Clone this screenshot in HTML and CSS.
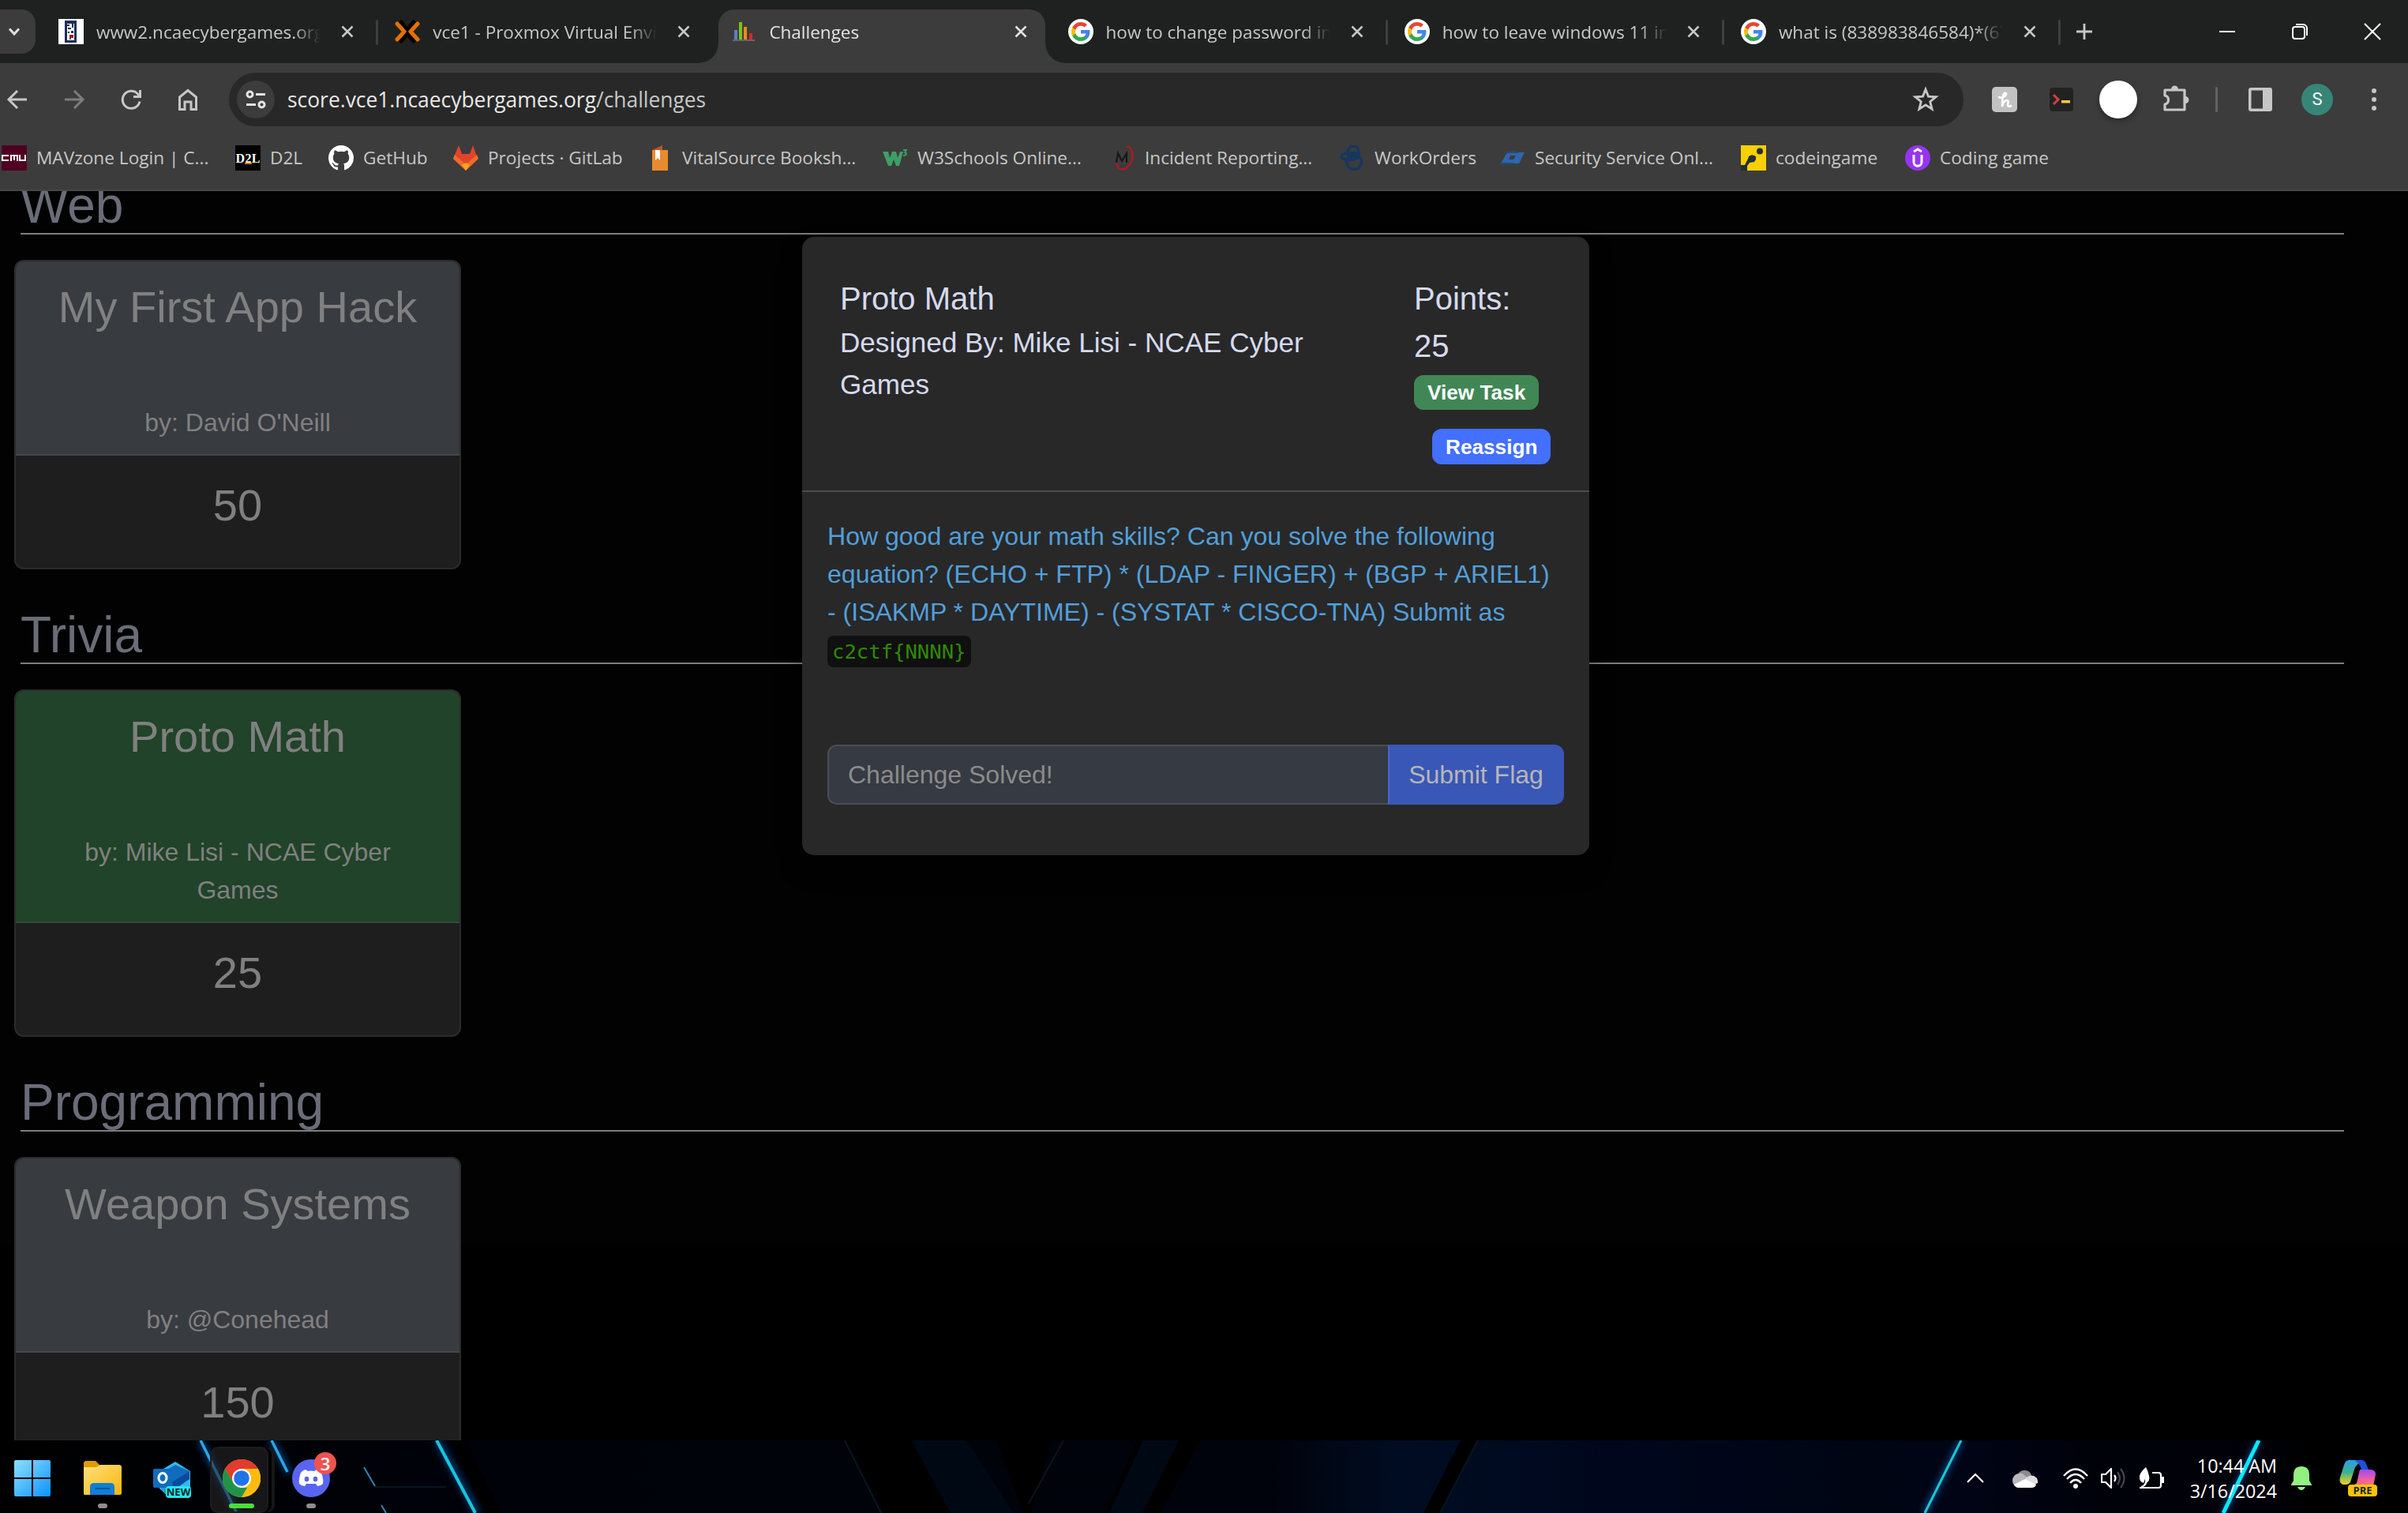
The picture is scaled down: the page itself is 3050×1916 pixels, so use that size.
FILE: index.html
```html
<!DOCTYPE html>
<html lang="en">
<head>
<meta charset="utf-8">
<title>Challenges</title>
<link rel="stylesheet" href="styles.css">
</head>
<body>
<svg class="defs" width="0" height="0" aria-hidden="true">
  <symbol id="x" viewBox="0 0 16 16"><path d="M1.5 1.5l13 13M14.500 1.5l-13 13" fill="none" stroke="currentColor" stroke-width="2.5"/></symbol>
  <symbol id="g" viewBox="0 0 32 32">
    <circle cx="16" cy="16" r="16" fill="#fff"/>
    <g transform="translate(4 4)">
      <path fill="#4285f4" d="M23.500 12.300c0-.8-.1-1.600-.2-2.300H12v4.500h6.500a5.500 5.500 0 0 1-2.400 3.600v3h3.900c2.300-2.100 3.500-5.200 3.500-8.800z"/>
      <path fill="#34a853" d="M12 24c3.200 0 6-1.100 8-2.900l-3.900-3c-1.100.7-2.500 1.200-4.100 1.200-3.100 0-5.800-2.100-6.700-5H1.300v3.100A12 12 0 0 0 12 24z"/>
      <path fill="#fbbc05" d="M5.300 14.300a7.200 7.200 0 0 1 0-4.600V6.600H1.300a12 12 0 0 0 0 10.800z"/>
      <path fill="#ea4335" d="M12 4.800c1.800 0 3.300.6 4.600 1.800L20 3.200A12 12 0 0 0 1.300 6.600l4 3.100c.9-2.900 3.600-4.900 6.700-4.900z"/>
    </g>
  </symbol>
</svg>

<header class="browser">
  <div class="tabstrip">
    <div class="tab-search"><svg width="16" height="16" viewBox="0 0 16 16"><path d="M2 4.500l6 6.500 6-6.500" fill="none" stroke="#dfdfdf" stroke-width="3"/></svg></div>
    <div class="tab divided">
      <svg class="fav" viewBox="0 0 32 32"><path fill="#fff" d="M0 0h32v32H0z"/><path fill="#1d2f57" d="M8 2h15v28H8z"/><path fill="#fff" d="M11 6h9v21h-9z"/><path fill="#1d2f57" d="M11 7h3v2h-3zM17 6h2v5h-2zM12 11h4v2h-4zM12 16h2v2h-2zM16 15h3v3h-3z"/><path fill="#9d1624" d="M14 20h5v4h-3v2h-2z"/></svg>
      <span class="tab-title">www2.ncaecybergames.org</span><svg class="close"><use href="#x"/></svg>
    </div>
    <div class="tab">
      <svg class="fav" viewBox="0 0 32 32"><g fill="none" stroke-linejoin="round" stroke-linecap="round"><path stroke="#000" stroke-width="5" d="M8 4l8 9 8-9M8 28l8-9 8 9"/><path stroke="#e57000" stroke-width="5" d="M3 6l9 10-9 10M29 6l-9 10 9 10"/></g></svg>
      <span class="tab-title">vce1 - Proxmox Virtual Envi</span><svg class="close"><use href="#x"/></svg>
    </div>
    <div class="tab active">
      <svg class="fav" viewBox="0 0 32 32"><path fill="#5a82c4" d="M4 14h4v12H4z"/><path fill="#7bc412" d="M10 4h4v22h-4z"/><path fill="#f08a1c" d="M16 10h4v16h-4z"/><path fill="#e02222" d="M23 18h4v8h-4z"/><path fill="#666" d="M2 26h28v2H2z"/></svg>
      <span class="tab-title">Challenges</span><svg class="close"><use href="#x"/></svg>
    </div>
    <div class="tab divided">
      <svg class="fav"><use href="#g"/></svg>
      <span class="tab-title">how to change password in</span><svg class="close"><use href="#x"/></svg>
    </div>
    <div class="tab divided">
      <svg class="fav"><use href="#g"/></svg>
      <span class="tab-title">how to leave windows 11 in</span><svg class="close"><use href="#x"/></svg>
    </div>
    <div class="tab divided">
      <svg class="fav"><use href="#g"/></svg>
      <span class="tab-title">what is (838983846584)*(67</span><svg class="close"><use href="#x"/></svg>
    </div>
    <svg class="new-tab" viewBox="0 0 22 22"><path d="M11 1v20M1 11h20" stroke="#c7c7c7" stroke-width="2.800"/></svg>
    <div class="window-controls">
      <svg width="22" height="22" viewBox="0 0 22 22"><path d="M1 11h20" stroke="#fff" stroke-width="2"/></svg>
      <svg width="22" height="22" viewBox="0 0 22 22" fill="none" stroke="#fff" stroke-width="2"><rect x="2" y="5" width="15" height="15" rx="3"/><path d="M6 2h9a5 5 0 0 1 5 5v9"/></svg>
      <svg width="22" height="22" viewBox="0 0 22 22"><path d="M1 1l20 20M21 1L1 21" stroke="#fff" stroke-width="2"/></svg>
    </div>
  </div>

  <div class="toolbar">
    <nav class="nav">
      <svg viewBox="0 0 28 28"><path d="M26 14H3M14 3L3 14l11 11" /></svg>
      <svg class="off" viewBox="0 0 28 28"><path d="M2 14h23M14 3l11 11-11 11"/></svg>
      <svg viewBox="0 0 28 28"><path d="M25 16.500A11 11 0 1 1 22.500 7L25 9.500M25.500 2v8.500H17"/></svg>
      <svg viewBox="0 0 28 28"><path d="M3.500 11L14 2.500 24.500 11v15.500H18V17h-8v9.500H3.500z"/></svg>
    </nav>
    <div class="omnibox">
      <div class="site-info"><svg width="26" height="26" viewBox="0 0 26 26" fill="none" stroke="#e3e3e3" stroke-width="3"><circle cx="5.500" cy="6.500" r="3.500"/><path d="M13 6.500h12M1 19.500h12"/><circle cx="20.500" cy="19.500" r="3.500"/></svg></div>
      <span class="url"><b>score.vce1.ncaecybergames.org</b>/challenges</span>
      <svg class="star" viewBox="0 0 32 32"><path d="M16 4l3.300 8.300 9 .6-6.900 5.700 2.200 8.700L16 22.500l-7.600 4.800 2.200-8.700-6.900-5.700 9-.6z" fill="none" stroke="#c7c7c7" stroke-width="2.700"/></svg>
    </div>
    <div class="extensions">
      <svg class="e32" viewBox="0 0 32 32"><rect width="32" height="32" rx="5" fill="#c2c2c2"/><path d="M9 13c4 2 9-1 9-4 0-2-3-2-4 2-1 4-1 9-1 14 1-5 3-8 6-8 3 0 1 4 1 6 0 2 2 2 4 1" fill="none" stroke="#fff" stroke-width="2.600" stroke-linecap="round"/></svg>
      <svg class="e32 term" viewBox="0 0 32 32"><rect x="1" y="1" width="30" height="30" rx="4" fill="#222"/><path d="M6 10l6 6-6 6" fill="none" stroke="#d63f38" stroke-width="3"/><path fill="#f6c944" d="M16 17h11v3.500H16z"/></svg>
      <span class="blank-ext"></span>
      <svg class="puzzle" viewBox="0 0 36 36"><path d="M5 8h25v25H5v-7c6-1 6-10 0-11z" fill="none" stroke="#c7c7c7" stroke-width="3.200" stroke-linejoin="round"/><path d="M13 7a4.500 4.500 0 0 1 9 0zM31 16a4 4 0 0 1 0 9z" fill="#c7c7c7"/></svg>
      <span class="bar"></span>
      <svg class="panel" viewBox="0 0 30 30"><path fill="#c7c7c7" fill-rule="evenodd" d="M3 0h24a3 3 0 0 1 3 3v24a3 3 0 0 1-3 3H3a3 3 0 0 1-3-3V3a3 3 0 0 1 3-3zM3.500 3.500v23H18v-23z"/></svg>
      <span class="avatar">S</span>
      <svg class="dots" viewBox="0 0 6 30" fill="#c7c7c7"><circle cx="3" cy="4" r="3"/><circle cx="3" cy="15" r="3"/><circle cx="3" cy="26" r="3"/></svg>
    </div>
  </div>

  <div class="bookmarks">
    <a><svg class="fav" viewBox="0 0 32 32"><path fill="#500021" d="M0 0h32v32H0z"/><path d="M9 13H1v6h8M12 20v-7h8v7M16 13v6M23 12v7h7v-7" fill="none" stroke="#fff" stroke-width="2"/></svg><span>MAVzone Login | C...</span></a>
    <a><svg class="fav" viewBox="0 0 32 32"><path fill="#000" d="M0 0h32v32H0z"/><text x="16" y="22" text-anchor="middle" class="d2l" textLength="31">D2L</text><path fill="#e87511" d="M12 22h9v2h-9z"/></svg><span>D2L</span></a>
    <a><svg class="fav" viewBox="0 0 16 16"><path fill="#fff" d="M8 0C3.580 0 0 3.580 0 8c0 3.540 2.290 6.530 5.470 7.590.4.070.55-.17.55-.38 0-.19-.01-.82-.01-1.490-2.010.37-2.530-.49-2.690-.94-.09-.23-.48-.94-.82-1.130-.28-.15-.68-.52-.01-.53.63-.01 1.080.58 1.230.82.72 1.210 1.870.87 2.330.66.070-.52.280-.87.510-1.070-1.780-.2-3.640-.89-3.640-3.950 0-.87.310-1.590.82-2.150-.08-.2-.36-1.020.08-2.120 0 0 .67-.21 2.200.82a7.600 7.600 0 0 1 4 0c1.530-1.040 2.200-.82 2.200-.82.44 1.100.16 1.920.08 2.120.51.56.82 1.270.82 2.150 0 3.070-1.870 3.750-3.650 3.950.29.250.54.730.54 1.480 0 1.070-.01 1.930-.01 2.200 0 .21.150.46.55.38A8.010 8.010 0 0 0 16 8c0-4.420-3.580-8-8-8z"/></svg><span>GetHub</span></a>
    <a><svg class="fav" viewBox="0 0 32 32"><path fill="#e24329" d="M7 0l4 11h10l4-11 6 17-15 15L0 17z"/><path fill="#ef6b2d" d="M2 12l14 12 14-12 2 5-16 15L0 17z"/><path fill="#fca326" d="M11 25l5-3 5 3-5 7z"/></svg><span>Projects · GitLab</span></a>
    <a><svg class="fav" viewBox="0 0 32 32"><path fill="#e88b2e" d="M6 6h20v26H6z"/><path fill="#c4502c" d="M6 6l13-6v6z"/><path fill="#fff" d="M10 6h6v13l-3-3-3 3z"/></svg><span>VitalSource Booksh...</span></a>
    <a><svg class="fav" viewBox="0 0 32 32"><path fill="#3f9e68" d="M0 8h7l2 8 3-8h5l2 8 3-8h4l-5 18h-4l-3-8-3 8H7z"/><path d="M26 6h4l-2 3c3 0 3 4-2 4" fill="none" stroke="#3f9e68" stroke-width="1.800"/></svg><span>W3Schools Online...</span></a>
    <a><svg class="fav" viewBox="0 0 32 32"><path d="M20 2c9-2 11 14 5 22-6 9-17 9-16-2" fill="none" stroke="#a51d25" stroke-width="2.500"/><path d="M8 22l2-12 5 10 6-10v12" fill="none" stroke="#151515" stroke-width="2"/></svg><span>Incident Reporting...</span></a>
    <a><svg class="fav" viewBox="0 0 32 32" fill="none" stroke="#16375f" stroke-width="3.500"><circle cx="17" cy="8" r="7"/><ellipse cx="13" cy="14" rx="11" ry="4.500"/><circle cx="18" cy="21" r="9.500"/></svg><span>WorkOrders</span></a>
    <a><svg class="fav" viewBox="0 0 32 32"><path fill="#2e65ac" fill-rule="evenodd" d="M9 9h22l-7 14H1zM13 13l-2 5h6l3-5z"/><path fill="#274a78" d="M9 8h14v2H8zM0 22h18v2H0z"/></svg><span>Security Service Onl...</span></a>
    <a><svg class="fav" viewBox="0 0 32 32"><path fill="#f6d000" d="M0 0h32v32H0z"/><path fill="#252e38" d="M0 32v-7h5l4-8 1-3 4-2 5 2v4l-2 3-6 1-3 4v6z"/><circle cx="24" cy="7.500" r="4" fill="#252e38"/></svg><span>codeingame</span></a>
    <a><svg class="fav" viewBox="0 0 32 32"><circle cx="16" cy="16" r="16" fill="#9634f0"/><path d="M11 12v9c0 7 10 7 10 0v-9M11 8l5-3 5 3" fill="none" stroke="#fff" stroke-width="3"/></svg><span>Coding game</span></a>
  </div>
</header>

<main class="page">
  <section>
    <h2>Web</h2>
    <article class="card"><div class="card-head"><h3>My First App Hack</h3><p>by: David O'Neill</p></div><div class="card-points">50</div></article>
  </section>
  <section>
    <h2>Trivia</h2>
    <article class="card solved"><div class="card-head"><h3>Proto Math</h3><p>by: Mike Lisi - NCAE Cyber Games</p></div><div class="card-points">25</div></article>
  </section>
  <section>
    <h2>Programming</h2>
    <article class="card"><div class="card-head"><h3>Weapon Systems</h3><p>by: @Conehead</p></div><div class="card-points">150</div></article>
  </section>
</main>

<div class="modal" role="dialog">
  <div class="modal-head">
    <div class="challenge"><div class="name">Proto Math</div><div class="author">Designed By: Mike Lisi - NCAE Cyber Games</div></div>
    <div class="score"><div class="name">Points:<br>25</div><span class="badge view">View Task</span><span class="badge reassign">Reassign</span></div>
  </div>
  <div class="modal-body">
    <p>How good are your math skills? Can you solve the following equation? (ECHO + FTP) * (LDAP - FINGER) + (BGP + ARIEL1) - (ISAKMP * DAYTIME) - (SYSTAT * CISCO-TNA) Submit as <code>c2ctf{NNNN}</code></p>
    <div class="flag"><div class="flag-input">Challenge Solved!</div><div class="flag-submit">Submit Flag</div></div>
  </div>
</div>

<footer class="taskbar">
  <svg class="wallpaper" viewBox="0 0 3050 92" preserveAspectRatio="none">
    <defs>
      <linearGradient id="base"><stop offset="0" stop-color="#000"/><stop offset=".19" stop-color="#00020a"/><stop offset=".3" stop-color="#00030a"/><stop offset=".53" stop-color="#01030c"/><stop offset=".58" stop-color="#000c22"/><stop offset=".61" stop-color="#000b20"/><stop offset=".68" stop-color="#00061c"/><stop offset=".77" stop-color="#000514"/><stop offset=".82" stop-color="#000414"/><stop offset=".87" stop-color="#00020a"/><stop offset=".94" stop-color="#000108"/><stop offset=".96" stop-color="#000"/></linearGradient>
      <filter id="glow" x="-50%" y="-20%" width="200%" height="140%"><feGaussianBlur stdDeviation="4"/></filter>
    </defs>
    <path fill="url(#base)" d="M0 0h3050v92H0z"/>
    <path fill="#000" d="M1072 0h82l50 92h-85zM1262 0h70l-26 92h-10zM1448 0h-8l-40 92h10zM1494 0h26l-50 92h-24zM1850 0h20l-45 92h-22zM570 0h20l45 92h-20z"/>
    <path fill="#000814" d="M1154 0h70l60 92h-80zM1448 0h45l-46 92h-42z"/>
    <path d="M1347 0l-44 80M1872 0l-48 92M1070 0l46 92" stroke="#06161e" stroke-width="2" fill="none"/>
    <g stroke="#0a4f96" stroke-width="6" fill="none" filter="url(#glow)"><path d="M254 0l46 92M344 0l22 42M554 0l50 92M2484 0l-46 92M2861 0l-45 92"/></g>
    <path d="M254 0l46 92M344 0l20 40" stroke="#2ba6e6" stroke-width="3.500" fill="none"/>
    <path d="M553 0l49 92" stroke="#12c8de" stroke-width="4" fill="none"/>
    <path d="M461 34l14 24M483 82l6 10" stroke="#3184b0" stroke-width="2" fill="none"/>
    <path d="M475 59h90" stroke="#071520" stroke-width="2"/>
    <path d="M2484 0l-46 92" stroke="#19c9cf" stroke-width="3"/>
    <path d="M2861 0l-45 92" stroke="#05e9fb" stroke-width="5"/>
  </svg>
  <div class="apps">
    <div class="app"><svg width="46" height="46" viewBox="0 0 46 46"><defs><linearGradient id="win" x2="1" y2="1" gradientUnits="objectBoundingBox"><stop stop-color="#8fdfff"/><stop offset="1" stop-color="#0a94fb"/></linearGradient></defs><path fill="url(#win)" d="M2 0h20v22H0V2a2 2 0 0 1 2-2zM24 0h20a2 2 0 0 1 2 2v20H24zM0 24h22v22H2a2 2 0 0 1-2-2zM24 24h22v20a2 2 0 0 1-2 2H24z"/></svg></div>
    <div class="app"><svg width="48" height="44" viewBox="0 0 48 44"><defs><linearGradient id="fold" x2="1" y2="1"><stop stop-color="#ffe07c"/><stop offset="1" stop-color="#f8b50c"/></linearGradient></defs><path fill="#dd9c00" d="M2 0h13l5 5v4H0V2z"/><path fill="url(#fold)" d="M0 8h16l5-3h25l2 2v35l-2 1H1l-1-1z"/><path fill="#0f7fd6" d="M8 43V33q0-5 5-5h21q5 0 5 5v10z"/><path fill="#08529f" d="M14 34h19v2H14z"/></svg><i class="dot"></i></div>
    <div class="app"><svg width="48" height="46" viewBox="0 0 48 46"><path fill="#35b8ee" d="M8 12L28 0l19 12v31H18L8 34z"/><path fill="#0f6cbd" d="M14 12l14-8 18 8v10L24 32z"/><path fill="#0a4a9c" d="M24 26l22-14v10L26 36z"/><path fill="#1d9be2" d="M8 32h17v12h-6z"/><rect y="9" width="24" height="24" rx="2" fill="#0f6cbd"/><ellipse cx="12" cy="20.500" rx="5" ry="6" fill="none" stroke="#fff" stroke-width="3"/><rect x="16" y="31" width="32" height="15" rx="4" fill="#27e4e8"/><text x="32" y="43" text-anchor="middle" class="new">NEW</text></svg></div>
    <div class="app current"><svg width="48" height="48" viewBox="0 0 48 48"><circle cx="24" cy="24" r="24" fill="#fbbc0f"/><path fill="#e33b2e" d="M3.200 12a24 24 0 0 1 41.600 0H24L13.600 30z"/><path fill="#219347" d="M3.200 12l10.400 18L24 36h10.400L24 48A24 24 0 0 1 3.200 12z"/><path fill="#fbbc0f" d="M44.800 12H24l10.400 18L24 48A24 24 0 0 0 44.800 12z"/><circle cx="24" cy="24" r="12" fill="#fff"/><circle cx="24" cy="24" r="9.800" fill="#1f74ea"/></svg><i class="dot wide"></i></div>
    <div class="app"><svg width="48" height="48" viewBox="0 0 48 48"><circle cx="24" cy="24" r="24" fill="#5865f2"/><path fill="#fff" d="M17 13l3 2q4-.8 8 0l3-2q4 1 6 4 3 8 2 14-3 3-7 3l-2-3H18l-2 3q-4 0-7-3-1-6 2-14 2-3 6-4z"/><ellipse cx="18.500" cy="25" rx="2.800" ry="3.300" fill="#5865f2"/><ellipse cx="29.500" cy="25" rx="2.800" ry="3.300" fill="#5865f2"/></svg><i class="dot"></i><b class="count">3</b></div>
  </div>
  <div class="tray">
    <svg class="t-up" width="24" height="14" viewBox="0 0 24 14"><path d="M2 12L12 2l10 10" fill="none" stroke="#fff" stroke-width="2.200"/></svg>
    <svg class="t-cloud" width="32" height="26" viewBox="0 0 32 26"><path fill="#8c8c90" d="M7 8a9 8 0 0 1 17 1l-6 9z"/><path fill="#b9b9bd" d="M8 7q5-1 8 3l8 6-16 9a8 9 0 0 1 0-18z"/><path fill="#dedee0" d="M16 14q5-6 11-4 6 3 5 9l-6 3z"/><path fill="#fff" d="M2 21l14-7 14 7q-1 4-6 4H8q-4 0-6-4z"/></svg>
    <svg class="t-wifi" width="32" height="28" viewBox="0 0 32 28"><g fill="none" stroke="#fff" stroke-width="2.300"><path d="M1 11q15-17 30 0M5 15q11-12 22 0M9 20q7-8 14 0"/></g><circle cx="16" cy="24" r="3" fill="#fff"/></svg>
    <svg class="t-vol" width="32" height="28" viewBox="0 0 32 28" fill="none" stroke="#fff" stroke-width="2.200"><path d="M1 9h5l7-7v24l-7-7H1z" stroke-linejoin="round"/><path d="M17 10q3 4 0 8"/><path d="M21 6q6 8 0 16M25 2q9 12 0 24" stroke="#44464f"/></svg>
    <svg class="t-bat" width="33" height="28" viewBox="0 0 33 28"><path d="M17 7h8q3 0 3 3v13q0 3-3 3H1M3 25q8-2 6-12" fill="none" stroke="#fff" stroke-width="2.200"/><path fill="#fff" d="M9 0Q2 6 1 11q-1 7 5 9l3-8-1 9q7-3 5-10-1-6-4-11zM30 12h2v8h-3v-8z"/></svg>
    <div class="clock">10:44 AM<br>3/16/2024</div>
    <svg class="t-bell" width="28" height="32" viewBox="0 0 28 32"><path fill="#93f082" d="M14 1q10 0 10 11v7l3 5v1H1v-1l3-5v-7Q4 1 14 1zM9 27h10q-2 4-5 4t-5-4z"/></svg>
    <svg class="t-pilot" width="48" height="46" viewBox="0 0 48 46"><defs><linearGradient id="cp1" x2="0" y2="1"><stop stop-color="#2a9df4"/><stop offset=".5" stop-color="#3bb28a"/><stop offset="1" stop-color="#f5d21c"/></linearGradient><linearGradient id="cp2" x2="0" y2="1"><stop stop-color="#a049f0"/><stop offset=".6" stop-color="#ee5fa6"/><stop offset="1" stop-color="#ff7a59"/></linearGradient></defs><path fill="url(#cp2)" d="M26 12h13q7 0 7 6l-3 15H17l5-4z"/><path fill="url(#cp1)" d="M12 0h16l-8 9-6 19q-2 3-5 3H5q-6-2-4-9L6 6q2-6 6-6z"/><path fill="#1d52e0" d="M22 0h7q3 0 5 5l3 7h-9q-2-8-8-11z"/><rect x="11" y="31" width="37" height="15" rx="4" fill="#ffc20a"/><text x="29.500" y="43" text-anchor="middle" class="new">PRE</text></svg>
  </div>
</footer>
</body>
</html>
```

FILE: styles.css
```css
* { box-sizing: border-box; }
html, body { margin: 0; height: 100%; }
body {
  width: 3050px; height: 1916px; overflow: hidden; background: #000;
  display: flex; flex-direction: column; position: relative;
  font-family: "Liberation Sans", Arial, sans-serif;
}
svg { display: block; flex: none; }
.defs { position: absolute; }

/* browser chrome */
.browser {
  height: 242px; flex: none; background: #3c3c3c; border-bottom: 2px solid #474747;
  font-family: "Open Sans", "Noto Sans", sans-serif; color: #c7c7c7;
}
.tabstrip { height: 80px; background: #1f2120; display: flex; align-items: center; }
.tab-search {
  width: 45px; height: 56px; margin-right: 7px; padding-left: 10px; border-radius: 0 18px 18px 0;
  background: #3c3c3c; display: flex; align-items: center;
}
.tab {
  width: 426.200px; height: 56px; padding: 0 30px 0 22px; flex: none; position: relative;
  display: flex; align-items: center; font-size: 22.500px;
}
.fav { width: 32px; height: 32px; }
.tab-title {
  width: 286px; margin-left: 16px; padding-top: 2px; white-space: nowrap; overflow: hidden; line-height: 32px;
  -webkit-mask-image: linear-gradient(90deg, #000 250px, transparent 284px);
  mask-image: linear-gradient(90deg, #000 250px, transparent 284px);
}
.close { width: 16px; height: 16px; margin-left: auto; color: #c7c7c7; }
.divided::after {
  content: ""; position: absolute; right: -1px; top: 13px; width: 3px; height: 32px;
  border-radius: 2px; background: #3e403f;
}
.active { height: 68px; margin-top: 12px; padding-bottom: 12px; color: #e3e3e3; }
.active .close { color: #e3e3e3; }
.active .fav, .active .tab-title, .active .close { position: relative; }
.active::before {
  content: ""; position: absolute; left: 6px; right: 7px; top: 0; bottom: 0;
  border-radius: 20px 20px 0 0; background: #3c3c3c;
}
.active::after {
  content: ""; position: absolute; left: -18px; right: -17px; bottom: 0; height: 24px;
  background:
    radial-gradient(circle at 0 0, transparent 23px, #3c3c3c 24px) left / 24px 24px no-repeat,
    radial-gradient(circle at 100% 0, transparent 23px, #3c3c3c 24px) right / 24px 24px no-repeat;
}
.new-tab { width: 22px; height: 22px; margin-left: 20px; }
.window-controls { margin-left: auto; padding-right: 34px; display: flex; gap: 70px; }

.toolbar { height: 92px; padding: 12px 40px 12px 8px; display: flex; align-items: center; }
.nav { display: flex; gap: 44px; width: 282px; }
.nav svg { width: 28px; height: 28px; fill: none; stroke: #c7c7c7; stroke-width: 3; }
.nav .off { stroke: #7d7d7d; }
.omnibox {
  width: 2197px; height: 68px; padding: 0 31px 0 10px; border-radius: 34px; background: #282828;
  display: flex; align-items: center;
}
.site-info {
  width: 48px; height: 48px; border-radius: 50%; background: #3c3c3c;
  display: flex; align-items: center; justify-content: center;
}
.url { margin-left: 16px; font-size: 26.400px; }
.url b { font-weight: 400; color: #e8e8e8; }
.star { width: 34px; height: 34px; margin-left: auto; }
.extensions { flex: 1; margin-left: 36px; display: flex; align-items: center; }
.e32 { width: 32px; height: 32px; }
.term { margin-left: 40px; }
.blank-ext {
  width: 48px; height: 48px; margin-left: 32px; border-radius: 50%; background: #fff;
  box-shadow: 0 3px 6px rgba(0, 0, 0, .35);
}
.puzzle { width: 36px; height: 36px; margin: 0 0 4px 30px; }
.bar { width: 3px; height: 32px; margin-left: 33px; border-radius: 2px; background: #626262; }
.panel { width: 30px; height: 30px; margin-left: 39px; }
.avatar {
  width: 40px; height: 40px; margin-left: 37px; border-radius: 50%; background: #378577; color: #fff;
  font: 22px/40px Roboto, sans-serif; text-align: center;
}
.dots { width: 6px; height: 30px; margin-left: 49px; }

.bookmarks {
  height: 56px; padding-left: 2px; display: grid; align-items: center; font-size: 22.640px;
  grid-template-columns: 296px 118px 158px 246px 298px 288px 291px 203px 305px 208px 200px;
}
.bookmarks a { display: flex; align-items: center; gap: 12px; white-space: nowrap; }
.bookmarks span { line-height: 30px; padding-bottom: 1px; }
.d2l { font: bold 16px "Liberation Serif", serif; fill: #fff; }

/* challenge board, dimmed behind the dialog */
.page {
  height: 1582px; flex: none; overflow: hidden; padding: 0 81px 0 18px;
  background: linear-gradient(#020202 0 1334px, #000 1334px);
}
.page section:first-child { margin-top: -21px; }
.page section { margin-bottom: 44px; }
.page h2 {
  height: 76px; margin: 0 0 32px 8px; border-bottom: 2px solid #7d7d7d;
  font-size: 64px; line-height: 78px; font-weight: 400; color: #6a6d78; white-space: nowrap;
}
.card {
  width: 566px; border: 2px solid #2b2b2b; border-radius: 12px; background: #1e1e1e;
  color: #808080; text-align: center; overflow: hidden;
}
.card-head { padding: 24px 32px 16px; background: #383b40; border-bottom: 2px solid #43464a; }
.solved .card-head { background: #204329; border-bottom-color: #2b4d35; }
.card h3 { margin: 0 0 89px; font-size: 56px; line-height: 67px; font-weight: 400; white-space: nowrap; }
.card p { margin: 0; font-size: 32px; line-height: 48px; }
.card-points { padding: 29px 0 46px; font-size: 56px; line-height: 67px; }

/* dialog */
.modal {
  position: absolute; left: 1016px; top: 300px; width: 997px; height: 783px;
  border-radius: 15px; background: #282828; box-shadow: 0 16px 32px rgba(0, 0, 0, .3);
}
.modal-head {
  height: 323px; padding: 48px; border-bottom: 2px solid #494d55; color: #d5daef;
  display: flex; justify-content: space-between;
}
.challenge { width: 640px; }
.name { font-size: 40px; line-height: 60px; }
.author { margin-top: -1px; font-size: 35.080px; line-height: 53px; }
.score { width: 174px; display: flex; flex-direction: column; align-items: flex-start; }
.badge {
  height: 44px; padding: 0 17px; border-radius: 12px; color: #fff;
  font-size: 26.200px; line-height: 44px; font-weight: 700;
}
.view { margin-top: 7px; background: #408755; }
.reassign { height: 45px; line-height: 46px; margin: 24px 0 0 23px; background: #4370ff; }
.modal-body { padding: 32px; }
.modal-body p { margin: 0; height: 192px; font-size: 32.040px; line-height: 48px; color: #529fda; }
code {
  padding: 5px 6px; border-radius: 8px; background: #101010; color: #2f8a00;
  font: 25.600px/30px "DejaVu Sans Mono", monospace;
}
.flag { height: 76px; margin-top: 96px; display: flex; font-size: 32px; line-height: 72px; }
.flag-input {
  flex: 1; padding-left: 24px; border: 2px solid #494d55; border-right: 0;
  border-radius: 12px 0 0 12px; background: #363a42; color: #8b8b8b;
}
.flag-submit {
  width: 223px; border: 2px solid #3957b6; border-left-color: #4565cc; border-radius: 0 12px 12px 0;
  background: #3957b6; color: #b6b6b6; text-align: center;
}

/* taskbar */
.taskbar {
  height: 92px; flex: none; position: relative; background: #000;
  display: flex; justify-content: space-between;
}
.wallpaper { position: absolute; inset: 0; width: 100%; height: 100%; }
.apps { position: relative; display: flex; align-items: center; gap: 18px; padding: 4px 0 0 9px; }
.app {
  width: 70px; height: 80px; position: relative;
  display: flex; align-items: center; justify-content: center;
}
.app svg { position: relative; }
.apps .app:first-child { margin: 0 2px 0 -2px; width: 68px; }
.apps .app:nth-child(3) svg { margin-top: 4px; }
.current::before {
  content: ""; position: absolute; left: -5px; top: 0; width: 70px; height: 80px;
  background: rgba(38, 38, 38, .6); border: 2px solid #1c1c1c; border-radius: 10px;
  box-shadow: 5px 0 0 -1px #000, 9px 0 0 -1px #171717;
}
.dot { position: absolute; bottom: 2px; left: 29px; width: 12px; height: 6px; border-radius: 3px; background: #8e8e8e; }
.dot.wide { left: 19px; width: 32px; background: #4ae036; }
.count {
  position: absolute; left: 39px; top: 8px; width: 28px; height: 28px; border-radius: 50%;
  background: #ef5350; color: #fff; font: 600 22px/28px "Open Sans", sans-serif; text-align: center;
}
.apps .app .count { top: 7px; }
.new { font: bold 13px "Open Sans", sans-serif; fill: #10262c; }
.tray { position: relative; display: flex; align-items: center; padding: 3px 39px 0 0; }
.t-up { margin-right: 35px; }
.t-cloud { margin-right: 32px; }
.t-wifi { margin-right: 16px; }
.t-vol { margin-right: 16px; }
.clock {
  width: 142px; margin-right: 17px; text-align: right; white-space: nowrap; color: #fff;
  font: 23.300px/32px "Open Sans", "Noto Sans", sans-serif;
}
.t-bell { margin-right: 34px; }
```
